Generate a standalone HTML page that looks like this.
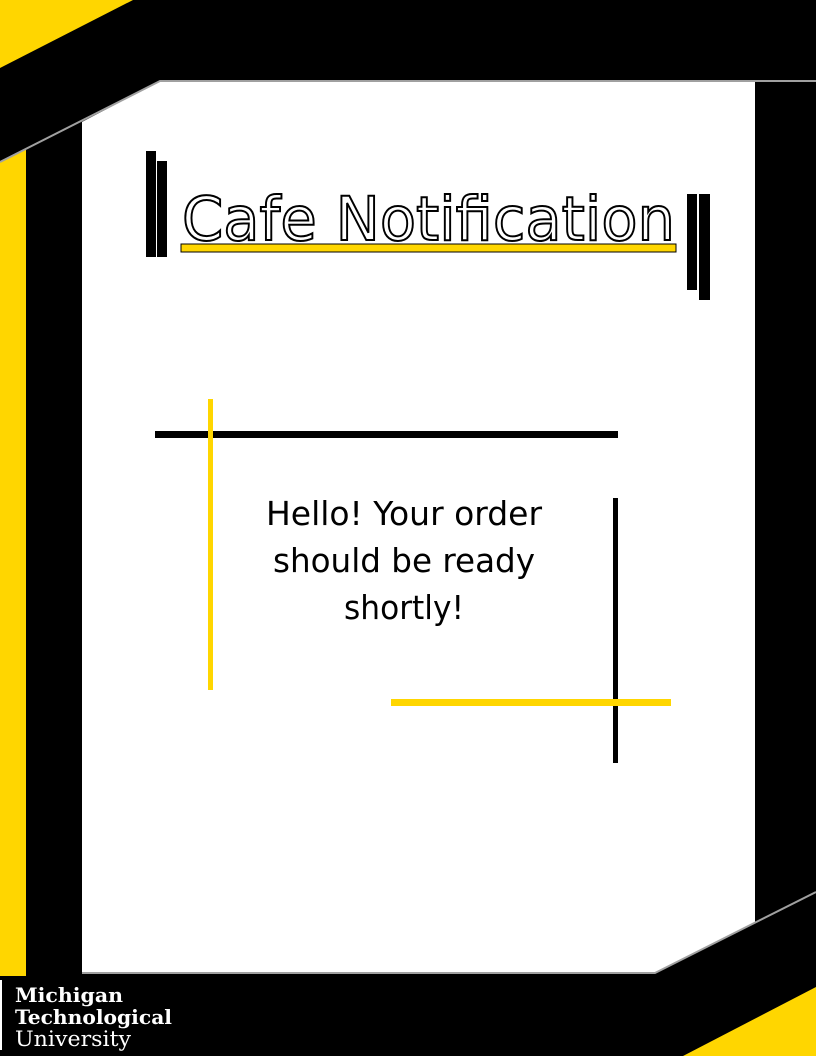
<!DOCTYPE html>
<html><head><meta charset="utf-8"><style>
html,body{margin:0;padding:0;background:#fff;}
svg{display:block;}
</style></head><body>
<svg width="816" height="1056" viewBox="0 0 816 1056" xmlns="http://www.w3.org/2000/svg">
<rect width="816" height="1056" fill="#000"/>
<polygon points="0,0 133,0 0,68" fill="#FFD600"/>
<polygon points="0,162 26,149 26,976 0,976" fill="#FFD600"/>
<polygon points="160,81 755,81 755,922 655,973 82,973 82,122" fill="#fff"/>
<polyline points="0,162 160,81 816,81" fill="none" stroke="#a0a0a0" stroke-width="2"/>
<polyline points="82,973 655,973 816,892" fill="none" stroke="#a0a0a0" stroke-width="2"/>
<polygon points="816,987 683,1056 816,1056" fill="#FFD600"/>
<rect x="146" y="151" width="10" height="106" fill="#000"/>
<rect x="157" y="161" width="10" height="96" fill="#000"/>
<rect x="687" y="194" width="10" height="96" fill="#000"/>
<rect x="699" y="194" width="11" height="106" fill="#000"/>
<text x="182" y="240" font-family="'DejaVu Sans',sans-serif" font-size="61" fill="#fff" stroke="#000" stroke-width="2" textLength="493" lengthAdjust="spacingAndGlyphs">Cafe Notification</text>
<rect x="181" y="244" width="495" height="8" fill="#FFD600" stroke="#000" stroke-width="1"/>
<rect x="155" y="431" width="463" height="7" fill="#000"/>
<rect x="208" y="399" width="5" height="291" fill="#FFD600"/>
<rect x="613" y="498" width="5" height="265" fill="#000"/>
<rect x="391" y="699" width="280" height="7" fill="#FFD600"/>
<g font-family="'DejaVu Sans',sans-serif" font-size="33" fill="#000" text-anchor="middle">
<text x="404" y="525" textLength="276" lengthAdjust="spacingAndGlyphs">Hello! Your order</text>
<text x="404" y="572" textLength="262" lengthAdjust="spacingAndGlyphs">should be ready</text>
<text x="404" y="619" textLength="120" lengthAdjust="spacingAndGlyphs">shortly!</text>
</g>
<rect x="0" y="980" width="2" height="70" fill="#fff"/>
<g font-family="'DejaVu Serif',serif" fill="#fff">
<text x="15" y="1002" font-size="20" font-weight="bold" textLength="108" lengthAdjust="spacingAndGlyphs">Michigan</text>
<text x="15" y="1024" font-size="20" font-weight="bold" textLength="157" lengthAdjust="spacingAndGlyphs">Technological</text>
<text x="15" y="1046" font-size="21" textLength="116" lengthAdjust="spacingAndGlyphs">University</text>
</g>
</svg>
</body></html>
